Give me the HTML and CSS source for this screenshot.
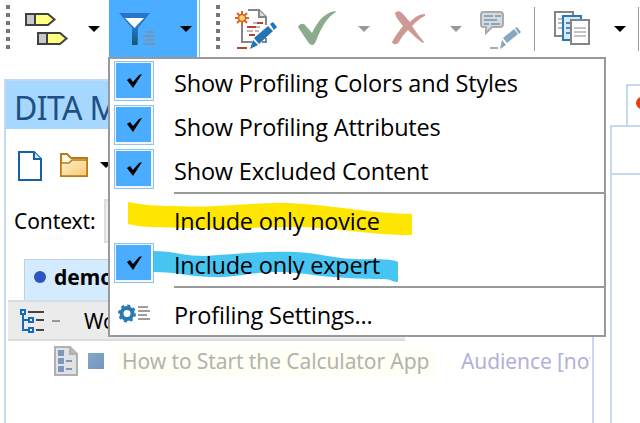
FILE: index.html
```html
<!DOCTYPE html>
<html lang="en">
<head>
<meta charset="utf-8">
<title>DITA Maps Manager</title>
<link rel="stylesheet" href="styles.css">
</head>
<body>
<header class="toolbar">
  <span class="grip"></span>
  <svg class="icon tags" width="44" height="57" viewBox="25 0 44 57"><g stroke="#404040" stroke-width="2" fill="#ffff80"><path d="M26 14H48L54.500 19.500L48 25H26Z"/><path fill="#c8c8c8" d="M26 14h9v11h-9z"/><path d="M38 33H60L66.500 38.500L60 44H38Z"/><path fill="#c8c8c8" d="M38 33h9v11h-9z"/></g></svg>
  <span class="arrow a1"></span>
  <button class="filter">
    <svg width="38" height="57" viewBox="118 0 38 57"><defs><linearGradient id="stem" x2="0" y2="1"><stop stop-color="#2877c8"/><stop offset="1" stop-color="#14576f"/></linearGradient></defs><path fill="#2775c7" d="M119 13h31L138 28v17h-6V28Z"/><path fill="url(#stem)" d="M132 27h5v18h-5z"/><path fill="#fff" d="M125 18h19l-9.500 10Z"/><path stroke="#7795ad" stroke-width="2" d="M146 32h8M143 36h11M145 40h9M143 44h12"/></svg>
    <span class="arrow"></span>
  </button>
  <span class="grip g2"></span>
  <svg class="icon edit" width="43" height="57" viewBox="235 0 43 57"><path d="M248 10h11l7 7v8M242 23v19h10M262 42h4v-4" fill="none" stroke="#858585" stroke-width="2"/><path d="M259 10v7h7" fill="#ddd" stroke="#858585" stroke-width="2"/><path d="M253 23h4M255 31h4M247 31h6M256 27h4" stroke="#bbb" stroke-width="2"/><path d="M257 23h6M247 27h9M249 35h6M237 48h10" stroke="#b9422b" stroke-width="2"/><path d="M242 11v14M235 18h14M237 13l10 10M247 13l-10 10" stroke="#d8632b" stroke-width="2"/><circle cx="242" cy="18" r="3.500" fill="#ffd36b" stroke="#d8632b" stroke-width="1.500"/><path fill="#2374b4" d="m254 38 14-12 5 5-14 13ZM270 24l3-2 4 5-3 3ZM253 40l5 5-8 4Z"/></svg>
  <svg class="icon accept" width="40" height="57" viewBox="297 0 40 57"><path fill="#8bab8d" d="M298 27c2-4 6-4 8-1l6 7c5-10 11-20 23-22l1 1c-9 5-15 16-20 29-2 5-5 5-8 1Z"/></svg>
  <span class="arrow muted a3"></span>
  <svg class="icon reject" width="36" height="57" viewBox="391 0 36 57"><path fill="#ce9995" d="M395 13c2-3 6-2 8 1l7 8c5-5 9-8 15-8v2c-5 2-9 6-13 10 4 6 8 11 12 16l-1 1c-6-4-10-8-15-13-4 4-7 8-9 12-2 3-6 3-7 0 3-6 7-11 11-16-4-5-7-8-8-13Z"/></svg>
  <span class="arrow muted a4"></span>
  <svg class="icon comment" width="42" height="57" viewBox="480 0 42 57"><path d="M483 12h17q3 0 3 3v9q0 3-3 3h-8l-6 6v-6h-3q-2 0-2-3v-9q0-3 2-3Z" fill="#d5dade" stroke="#aaa" stroke-width="2"/><path d="M484 16h9m2 0h6M484 20h13M484 24h5m2 0h9" stroke="#8ba5b9" stroke-width="2"/><path d="M490 48h8" stroke="#aaa" stroke-width="2"/><path fill="#88a6bd" d="m503 38 11-9 4 5-11 9ZM515 28l2-1 4 5-2 2ZM502 40l4 5-6 4Z"/></svg>
  <span class="sep s1"></span>
  <svg class="icon docs" width="37" height="57" viewBox="554 0 37 57"><g fill="#fff" stroke-width="2"><path stroke="#858585" d="M555 12h18v24h-18z"/><path d="M558 19h5m-5 4h5m-5 5h5" stroke="#bbb"/><path fill="#d4eaff" stroke="#2978b8" d="M563 16h18v24h-18z"/><path d="M566 23h5m-5 5h5m-5 5h5" stroke="#5d84aa"/><path stroke="#858585" d="M571 20h18v24h-18z"/><path d="M574 28h12m-12 4h12m-12 4h12" stroke="#bfc4c9"/></g></svg>
  <span class="arrow a5"></span>
  <span class="sep s2"></span>
</header>

<main class="workspace">
  <section class="maps">
    <h1>DITA Maps Manager</h1>
    <div class="actions">
      <svg width="25" height="32" viewBox="18 151 25 32"><path d="M19 152h15l7 7v21H19Z" fill="#fff" stroke="#1560a8" stroke-width="2"/><path d="M34 152v7h7" fill="#cfe5fa" stroke="#1560a8" stroke-width="2"/></svg>
      <svg class="folder" width="29" height="26" viewBox="60 152 29 26"><defs><linearGradient id="fold" x2="1" y2="1"><stop stop-color="#fff0cc"/><stop offset="1" stop-color="#f7ca73"/></linearGradient></defs><path d="M61 176v-22h6l4 4h16v18Z" fill="#fff8e8" stroke="#b87c12" stroke-width="2"/><path d="M61 176v-13h8l3-3h15v16Z" fill="url(#fold)" stroke="#b87c12" stroke-width="1.500"/></svg>
      <span class="arrow"></span>
    </div>
    <div class="context"><label>Context:</label><span class="combo"></span></div>
    <div class="tabs"><div class="tab"><i class="dot"></i>demo.ditamap</div></div>
    <div class="row root">
      <svg width="24" height="26" viewBox="20 308 24 26"><path d="M23 314v16h6M23 320h6" fill="none" stroke="#1769bd" stroke-width="2"/><g fill="#e7f3ff" stroke="#1769bd" stroke-width="2"><path d="M21 310h4v4h-4zM29 318h4v4h-4zM29 328h4v4h-4z"/></g><path d="M28 312h16m-8 8h8m-8 10h8" stroke="#444" stroke-width="2"/></svg>
      <span class="dash"></span><span>Working</span>
    </div>
    <div class="row topic">
      <svg width="25" height="31" viewBox="54 345 25 31"><path d="M55 346h15l7 7v21H55Z" fill="#e2e2e2" stroke="#b0b0b0" stroke-width="2"/><path d="M70 346v7h7" fill="#bbb" stroke="#b0b0b0" stroke-width="2"/><path d="M58 349h6v6h-6zm0 8h6v6h-6zm0 8h6v6h-6zM66 359h6v2h-6zm0 8h6v2h-6z" fill="#7b98bb"/></svg>
      <i class="square"></i><span class="title">How to Start the Calculator App</span><span class="audience">Audience [novice]</span>
    </div>
  </section>
  <section class="editor">
    <div class="etab"><i></i></div>
    <div class="ebar"></div>
    <div class="ebody"></div>
  </section>
</main>

<div class="menu">
  <div class="item"><span class="check"><svg viewBox="0 0 16 14"><path d="M1 6l3-2 3 4L13 1l3-1L7 14Z"/></svg></span><span class="label l1">Show Profiling Colors and Styles</span></div>
  <div class="item"><span class="check"><svg viewBox="0 0 16 14"><path d="M1 6l3-2 3 4L13 1l3-1L7 14Z"/></svg></span><span class="label l2">Show Profiling Attributes</span></div>
  <div class="item"><span class="check"><svg viewBox="0 0 16 14"><path d="M1 6l3-2 3 4L13 1l3-1L7 14Z"/></svg></span><span class="label l3">Show Excluded Content</span></div>
  <hr>
  <div class="item"><span class="nocheck"></span><span class="label l4">Include only novice</span></div>
  <div class="item"><span class="check"><svg viewBox="0 0 16 14"><path d="M1 6l3-2 3 4L13 1l3-1L7 14Z"/></svg></span><span class="label l5">Include only expert</span></div>
  <hr>
  <div class="item"><span class="nocheck"><svg width="34" height="20" viewBox="118 304 34 20"><circle cx="127" cy="313.500" r="5.500" fill="none" stroke="#2878b6" stroke-width="4"/><circle cx="127" cy="313.500" r="7.800" fill="none" stroke="#2878b6" stroke-width="2.400" stroke-dasharray="3.060 3.060"/><path d="M138 307h10m-10 4h12m-12 4h9m-9 4h12" stroke="#7e7e7e" stroke-width="1.700"/></svg></span><span class="label l6">Profiling Settings...</span></div>
  <svg class="marker" width="300" height="90" viewBox="120 195 300 90"><path fill="#ffe600" d="M128 202c15 3 28 4 45 4 47 2 72-3 110-3 47 1 80 10 129 11v21c-45 0-70-7-110-8-48 0-80 3-114 1-24-1-46 0-60-4Z"/><path fill="#32bff2" fill-opacity=".9" d="M153 251c20 0 30 5 52 5 30-2 58-5 90-4 24 1 42 7 60 7 16 1 36-1 43 3v20c-8 0-5-3-15-3-24 0-40-1-62-3-22-3-30-4-48-4-26 1-40 6-60 5-22 0-35-5-60-5Z"/></svg>
</div>
</body>
</html>
```
FILE: styles.css
```css
* { box-sizing: border-box; }
body {
  margin: 0;
  width: 640px;
  height: 423px;
  overflow: hidden;
  position: relative;
  background: #fff;
  color: #000;
  font-family: "Noto Sans", "Open Sans", sans-serif;
}
svg { display: block; flex: none; }

/* Main toolbar */
.toolbar { display: flex; height: 57px; align-items: flex-start; }
.grip {
  flex: none;
  width: 4px;
  height: 44px;
  margin: 5px 0 0 6px;
  background: repeating-linear-gradient(#777 0 4px, transparent 4px 8px);
}
.g2 { margin-left: 16px; }
.arrow {
  flex: none;
  width: 12px;
  height: 6px;
  margin-top: 26px;
  background: #000;
  clip-path: polygon(0 0, 100% 0, 50% 100%);
}
.muted { background: #999; }
.tags { margin-left: 15px; }
.a1 { margin-left: 19px; }
.filter {
  display: flex;
  flex: none;
  align-items: flex-start;
  width: 91px;
  height: 57px;
  margin-left: 9px;
  padding: 0 0 0 9px;
  border: 0;
  background: linear-gradient(90deg, #4aadff 88px, #eef7ff 88px 90px, #83bdee 90px);
}
.filter .arrow { margin-left: 24px; }
.edit { margin-left: 15px; }
.accept { margin-left: 19px; }
.a3 { margin-left: 21px; }
.reject { margin-left: 21px; }
.a4 { margin-left: 23px; }
.comment { margin-left: 18px; }
.sep { flex: none; width: 1px; height: 44px; margin-top: 7px; background: #999; }
.s1 { margin-left: 12px; }
.docs { margin-left: 19px; }
.a5 { margin-left: 23px; }
.s2 { margin-left: 12px; }

/* Workspace */
.workspace { display: flex; height: 366px; }
.maps {
  flex: none;
  width: 590px;
  margin: 22px 0 0 4px;
  border: 2px solid #c4d8f1;
  border-bottom: 0;
  overflow: hidden;
}
.maps h1 {
  margin: 0;
  height: 48px;
  padding-left: 8px;
  background: #a6d8ff;
  color: #1f4f85;
  font: 32px/53px "Noto Sans", sans-serif;
  letter-spacing: -.6px;
}
.actions { display: flex; height: 70px; padding: 22px 0 0 12px; }
.folder { margin: 1px 0 0 17px; }
.actions .arrow { margin: 11px 0 0 11px; }
.context { display: flex; height: 60px; padding-left: 8px; font-size: 21px; line-height: 44px; }
.context label { width: 90px; letter-spacing: -.1px; }
.combo { width: 260px; height: 44px; background: #efefef; border: 2px solid #ddd; }
.tabs { display: flex; height: 41px; padding-left: 18px; }
.tab {
  display: flex;
  align-items: center;
  width: 190px;
  padding: 0 0 6px 9px;
  background: #d4eaff;
  border: 1px solid #b9d1ea;
  border-bottom: 0;
  font-size: 21px;
  line-height: 28px;
  font-weight: 700;
}
.dot { width: 12px; height: 12px; margin-right: 8px; border-radius: 50%; background: #2c55c0; }
.row { display: flex; align-items: center; font-size: 21px; white-space: nowrap; }
.root {
  width: 397px;
  height: 41px;
  margin-left: 2px;
  padding-left: 12px;
  background: #ebebeb;
  border-top: 2px solid #d4dce5;
  border-bottom: 2px solid #dcdcdc;
}
.dash { width: 8px; height: 2px; margin: 0 24px 0 8px; background: #999; }
.topic { height: 40px; padding-left: 48px; color: #b3b3ac; }
.square { width: 16px; height: 16px; margin: 0 12px 0 9px; background: linear-gradient(135deg, #86a7cd, #7595b9); }
.title { width: 320px; height: 29px; padding-left: 6px; background: #fffff5; line-height: 28px; letter-spacing: -.1px; }
.audience { margin-left: 25px; width: 129px; overflow: hidden; color: #b3b0da; letter-spacing: -.1px; }

.editor { flex: 1; margin: 27px 0 0 16px; }
.etab { height: 41px; margin-left: 16px; border: solid #c4d8f1; border-width: 2px 0 0 2px; overflow: hidden; }
.etab i { display: block; width: 12px; height: 12px; margin: 11px 0 0 8px; border-radius: 50%; background: #ee3b10; }
.ebar { height: 48px; border: solid #c4d8f1; border-width: 2px 0 0 2px; }
.ebody { height: 250px; border: solid #c4d8f1; border-width: 2px 0 0 2px; }

/* Profiling drop-down */
.menu {
  position: absolute;
  left: 108px;
  top: 57px;
  width: 498px;
  height: 280px;
  padding-top: 1px;
  background: #fff;
  border: 2px solid #999;
}
.item { display: flex; height: 44px; }
.check, .nocheck { flex: none; width: 40px; height: 40px; margin-left: 4px; }
.check {
  display: grid;
  place-items: center;
  margin-top: 1px;
  background: #4aadff;
  border: 1px solid #8dc4f3;
  box-shadow: inset 1px 1px #f4f4f4, inset -2px -2px #f4f4f4;
}
.check svg { width: 16px; height: 14px; }
.label {
  position: relative;
  z-index: 1;
  margin-left: 20px;
  font: 23.500px/46px "Open Sans", "Noto Sans", sans-serif;
  letter-spacing: -.19px;
  white-space: nowrap;
}
.menu hr { height: 2px; margin: 0 0 4px 64px; border: 0; background: #999; }
.nocheck svg { margin: 12px 0 0 4px; }
.marker { position: absolute; left: 10px; top: 136px; }
```
